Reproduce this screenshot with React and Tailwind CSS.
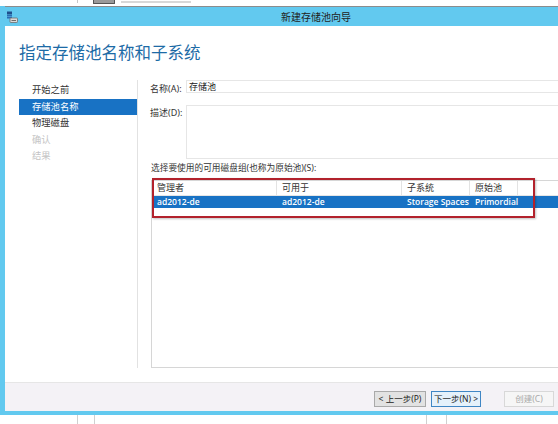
const font = { fontFamily: '"Noto Sans", "Noto Sans CJK SC", sans-serif' };
const latin = { fontFamily: '"Open Sans", "Noto Sans", "Noto Sans CJK SC", sans-serif' };

const navItems = [
  { label: '开始之前', state: 'normal' },
  { label: '存储池名称', state: 'active' },
  { label: '物理磁盘', state: 'normal' },
  { label: '确认', state: 'disabled' },
  { label: '结果', state: 'disabled' },
];

const columns = [
  { title: '管理者', w: 'w-[125px]' },
  { title: '可用于', w: 'w-[125px]' },
  { title: '子系统', w: 'w-[68px]' },
  { title: '原始池', w: 'w-[48px]' },
];

const row = ['ad2012-de', 'ad2012-de', 'Storage Spaces', 'Primordial'];

const WizardIcon = () => (
  <svg width="12" height="12" viewBox="0 0 12 12">
    <rect x="1" y="0.5" width="5" height="3" fill="#1f4e8c" />
    <rect x="1" y="4" width="5" height="1.5" fill="#2b6cb5" />
    <rect x="1" y="6" width="5" height="1.5" fill="#2b6cb5" />
    <rect x="4" y="7" width="7.5" height="4.5" rx="0.8" fill="#d9d9d9" stroke="#6d6d6d" strokeWidth="0.8" />
    <rect x="5.5" y="9" width="4.5" height="1" fill="#6d6d6d" />
  </svg>
);

export default function App() {
  return (
    <div className="w-[558px] h-[424px] overflow-hidden bg-white flex flex-col text-[#2b2b2b]" style={font}>
      {/* taskbar remnants above the window */}
      <div className="h-[6px] flex items-start shrink-0">
        <div className="ml-[77px] w-px h-[3px] bg-[#c8c8c8]" />
        <div className="ml-[15px] w-[22px] h-[4px] border border-t-0 border-[#555] rounded-b-[1px] bg-[#9a9a9a]" />
        <div className="ml-[6px] w-[70px] h-[2px] mt-[1px] bg-[#d8d8d8]" />
      </div>

      {/* wizard window */}
      <div className="h-[409px] shrink-0 flex flex-col border-l-[5px] border-b-[4px] border-[#62c9ef]">
        <div className="h-[20px] shrink-0 bg-[#62c9ef] border-t border-[#8c8c8c] flex items-center">
          <div className="ml-[1px]">
            <WizardIcon />
          </div>
          <div className="ml-[263px] text-[10px] leading-none text-[#222]">新建存储池向导</div>
        </div>

        <div className="flex-1 bg-white flex flex-col">
          <div className="h-[54px] shrink-0 pl-[14px] pt-[16px]">
            <h1 className="text-[16.5px] leading-[22px] text-[#1d6ba6]">指定存储池名称和子系统</h1>
          </div>

          <div className="h-[288px] shrink-0 flex overflow-hidden">
            {/* steps */}
            <div className="w-[133px] shrink-0 border-r border-[#e2e2e2] pl-[14px] pt-[2px]">
              {navItems.map((item) => (
                <div
                  key={item.label}
                  className={
                    item.state === 'active'
                      ? 'h-[16.5px] w-[118px] pl-[13px] flex items-center text-[9.3px] bg-[#1872c4] text-white'
                      : item.state === 'disabled'
                      ? 'h-[16.5px] w-[118px] pl-[13px] flex items-center text-[9.3px] text-[#c4c4c4]'
                      : 'h-[16.5px] w-[118px] pl-[13px] flex items-center text-[9.3px] text-[#333]'
                  }
                >
                  {item.label}
                </div>
              ))}
            </div>

            {/* form */}
            <div className="w-[440px] shrink-0 pl-[12px] flex flex-col">
              <div className="flex items-start">
                <div className="w-[36px] pt-[3px] text-[9px] leading-[11px] text-[#333]">名称(A):</div>
                <div className="flex-1 h-[13px] border border-[#e6e6e6] pl-[2px] text-[9px] leading-[11px] text-[#222]">存储池</div>
              </div>
              <div className="flex items-start mt-[11px]">
                <div className="w-[36px] pt-[2px] text-[9px] leading-[11px] text-[#333]">描述(D):</div>
                <div className="flex-1 h-[54px] border border-[#e6e6e6]" />
              </div>
              <div className="mt-[4px] h-[11px] pl-[1px] text-[8.7px] leading-[11px] text-[#333] whitespace-nowrap">
                选择要使用的可用磁盘组(也称为原始池)(S):
              </div>
              <div className="relative mt-[6px] ml-[1px] flex-1 border border-[#d6d6d6] border-r-0">
                <div className="flex h-[15px] border-b border-[#e6e6e6] text-[9px] text-[#333]">
                  {columns.map((c) => (
                    <div key={c.title} className={`${c.w} shrink-0 pl-[5px] flex items-center border-r border-[#e3e3e3] whitespace-nowrap`}>
                      {c.title}
                    </div>
                  ))}
                </div>
                <div className="flex h-[12px] bg-[#1872c4] text-white text-[8.5px] font-semibold" style={latin}>
                  {row.map((v, i) => (
                    <div key={i} className={`${columns[i].w} shrink-0 pl-[5px] flex items-center leading-none whitespace-nowrap`}>
                      {v}
                    </div>
                  ))}
                </div>
                {/* red highlight annotation */}
                <div className="absolute left-[0px] top-[-3px] w-[383px] h-[40px] border-2 border-[#b2222c] shadow-[1px_1px_2px_rgba(0,0,0,0.25)]" />
              </div>
            </div>
          </div>

          <div className="h-[14px] shrink-0" />

          <div className="h-[29px] shrink-0 border-t border-[#e6e6e6] bg-[#f4f2f6] flex items-start pt-[8px]">
            <button className="ml-[369px] w-[52px] h-[16px] border border-[#a9a9a9] bg-[#e2e2e2] text-[8.5px] leading-none text-[#222] whitespace-nowrap">
              &lt; 上一步(P)
            </button>
            <button className="ml-[5px] w-[50px] h-[16px] border border-[#3f86c4] bg-[#e5f1fb] text-[8.5px] leading-none text-[#222] whitespace-nowrap">
              下一步(N) &gt;
            </button>
            <button className="ml-[23px] w-[50px] h-[16px] border border-[#d8d8d8] bg-[#f6f6f6] text-[8.5px] leading-none text-[#a8a8a8] whitespace-nowrap">
              创建(C)
            </button>
          </div>
        </div>
      </div>

      {/* taskbar below */}
      <div className="flex-1 flex">
        <div className="ml-[77px] w-px h-full bg-[#d0d0d0]" />
        <div className="ml-[16px] w-px h-full bg-[#d0d0d0]" />
        <div className="ml-[331px] w-px h-full bg-[#d0d0d0]" />
        <div className="ml-[19px] w-px h-full bg-[#d0d0d0]" />
      </div>
    </div>
  );
}
